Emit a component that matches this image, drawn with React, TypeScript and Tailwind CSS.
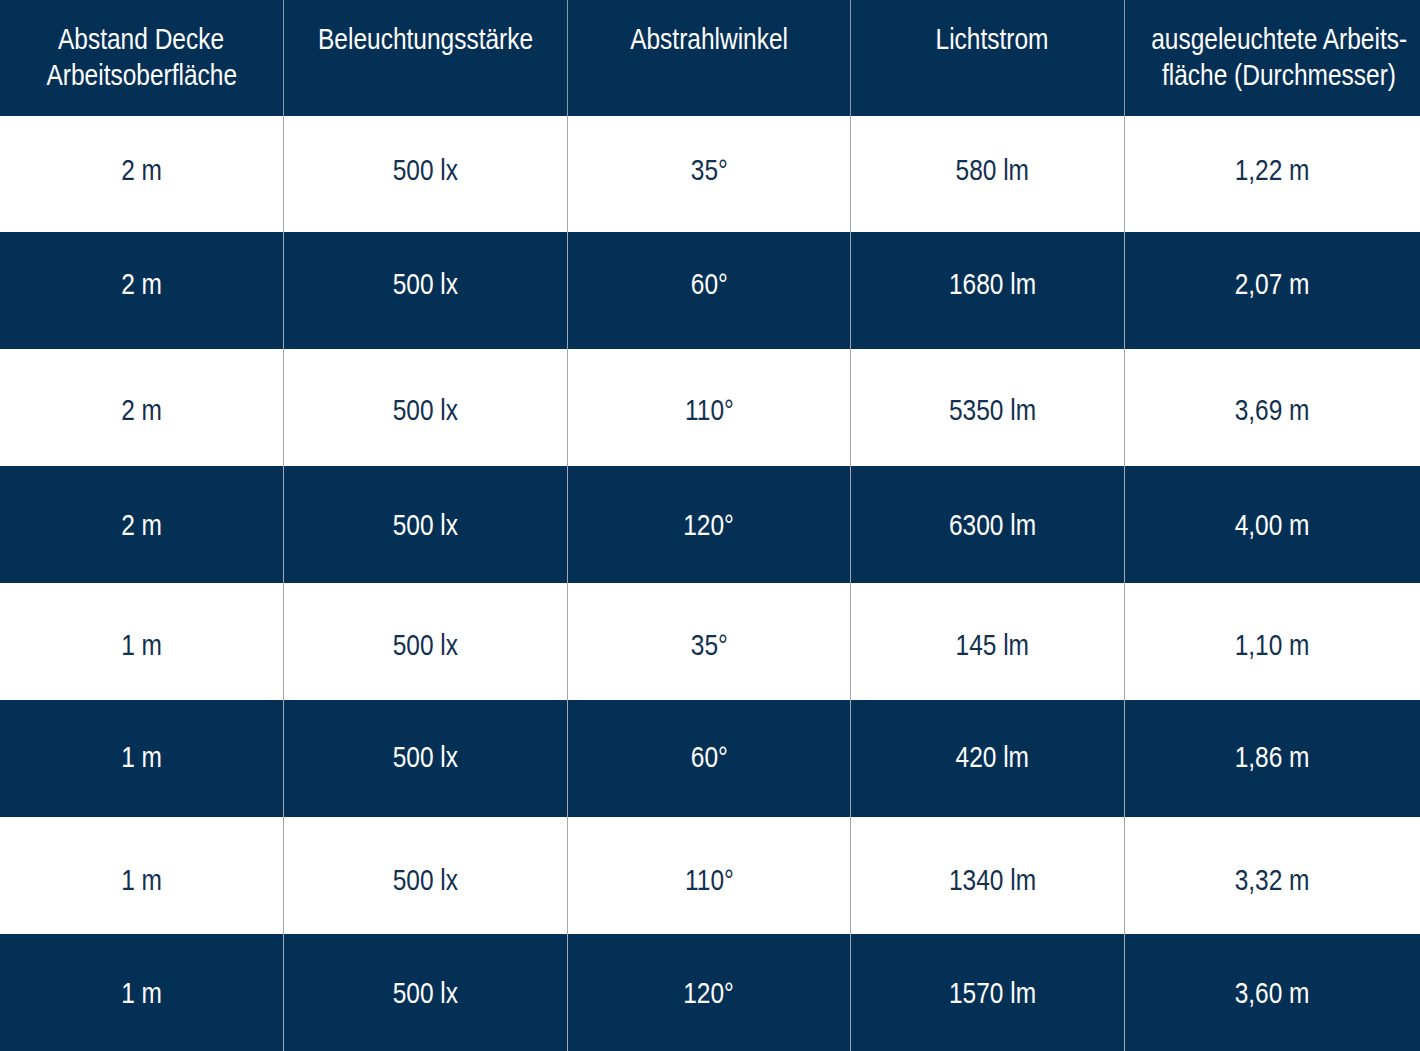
const headers = [
  ['Abstand Decke', 'Arbeitsoberfläche'],
  ['Beleuchtungsstärke'],
  ['Abstrahlwinkel'],
  ['Lichtstrom'],
  ['ausgeleuchtete Arbeits-', 'fläche (Durchmesser)'],
];

// pad: kleine vertikale Versätze wie im Original
const rows = [
  { pad: 'pb-[9px]', cells: ['2 m', '500 lx', '35°', '580 lm', '1,22 m'] },
  { pad: 'pb-[13px]', cells: ['2 m', '500 lx', '60°', '1680 lm', '2,07 m'] },
  { pad: 'pt-[5px]', cells: ['2 m', '500 lx', '110°', '5350 lm', '3,69 m'] },
  { pad: 'pt-[1px]', cells: ['2 m', '500 lx', '120°', '6300 lm', '4,00 m'] },
  { pad: 'pt-[7px]', cells: ['1 m', '500 lx', '35°', '145 lm', '1,10 m'] },
  { pad: 'pb-[3px]', cells: ['1 m', '500 lx', '60°', '420 lm', '1,86 m'] },
  { pad: 'pt-[9px]', cells: ['1 m', '500 lx', '110°', '1340 lm', '3,32 m'] },
  { pad: 'pt-[1px]', cells: ['1 m', '500 lx', '120°', '1570 lm', '3,60 m'] },
];

const cols = 'grid grid-cols-[283px_284px_283px_274px_1fr]';

// schmale Schrift: Liberation Sans horizontal gestaucht
function Narrow({ children }: { children: string }) {
  return <span className="inline-block whitespace-nowrap scale-x-[0.83]">{children}</span>;
}

export default function App() {
  return (
    <div className="w-[1420px] h-[1051px] overflow-hidden bg-white text-[29.5px] leading-[36px] font-['Liberation_Sans',Arial,sans-serif]">
      <div className={`${cols} h-[116px] bg-[#053056] text-white`}>
        {headers.map((lines, i) => (
          <div
            key={i}
            className={`flex flex-col items-center pt-[21px] text-center ${i > 0 ? 'border-l border-[#8d9aa8]' : ''} ${
              i === 3 ? 'pl-[10px]' : ''
            }`}
          >
            {lines.map((l) => (
              <Narrow key={l}>{l}</Narrow>
            ))}
          </div>
        ))}
      </div>
      {rows.map((row, r) => {
        const dark = r % 2 === 1;
        return (
          <div
            key={r}
            className={`${cols} ${r === 0 ? 'h-[116px]' : 'h-[117px]'} ${
              dark ? 'bg-[#053056] text-white' : 'bg-white text-[#12304f]'
            }`}
          >
            {row.cells.map((cell, i) => (
              <div
                key={i}
                className={`flex items-center justify-center ${row.pad} ${i > 0 ? 'border-l border-[#a3a7ab]' : ''} ${
                  i === 3 ? 'pl-[10px]' : ''
                }`}
              >
                <Narrow>{cell}</Narrow>
              </div>
            ))}
          </div>
        );
      })}
    </div>
  );
}
